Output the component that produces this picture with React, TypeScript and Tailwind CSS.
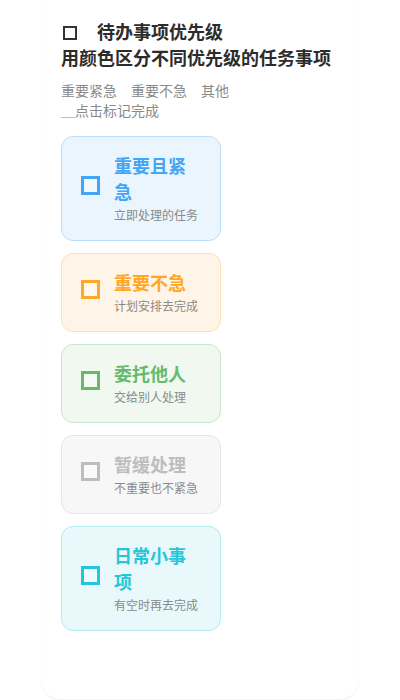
const FONT = {
  fontFamily: '"Noto Sans CJK SC", "Noto Sans", sans-serif',
};

type Card = {
  title: string;
  desc: string;
  text: string;
  box: string;
  bg: string;
  border: string;
};

const CARDS: Card[] = [
  {
    title: "重要且紧急",
    desc: "立即处理的任务",
    text: "text-[#42a5f5]",
    box: "border-[#42a5f5] bg-[#f1f8ff]",
    bg: "bg-[#ebf5fe]",
    border: "border-[#bbdefb]",
  },
  {
    title: "重要不急",
    desc: "计划安排去完成",
    text: "text-[#ffa726]",
    box: "border-[#ffa726] bg-[#fff8f0]",
    bg: "bg-[#fff4e8]",
    border: "border-[#ffe0b2]",
  },
  {
    title: "委托他人",
    desc: "交给别人处理",
    text: "text-[#66bb6a]",
    box: "border-[#66bb6a] bg-[#f5faf5]",
    bg: "bg-[#f0f8f0]",
    border: "border-[#c8e6c9]",
  },
  {
    title: "暂缓处理",
    desc: "不重要也不紧急",
    text: "text-[#bdbdbd]",
    box: "border-[#bdbdbd] bg-[#fafafa]",
    bg: "bg-[#f7f7f7]",
    border: "border-[#e6e6e6]",
  },
  {
    title: "日常小事项",
    desc: "有空时再去完成",
    text: "text-[#26c6da]",
    box: "border-[#26c6da] bg-[#eefafc]",
    bg: "bg-[#e8f8fb]",
    border: "border-[#b2ebf2]",
  },
];

function TaskCard({ card }: { card: Card }) {
  return (
    <div
      className={`flex w-[160px] items-center rounded-xl border pb-4 pl-[19px] pr-[18px] pt-[15px] ${card.bg} ${card.border}`}
    >
      <span
        className={`-mt-[6px] h-[19px] w-[19px] shrink-0 border-[3px] ${card.box}`}
      />
      <div className="ml-[14px] flex-1">
        <div className={`text-[18px] font-semibold leading-[26px] ${card.text}`}>
          {card.title}
        </div>
        <div className="mt-0.5 text-[12px] leading-[18px] text-[#8a8a8a]">
          {card.desc}
        </div>
      </div>
    </div>
  );
}

export default function App() {
  return (
    <div className="min-h-[700px] bg-white" style={FONT}>
      <div className="mx-auto w-[318px] rounded-b-[20px] bg-white px-5 pb-[68px] pt-[18px] shadow-[0_2px_3px_-1px_rgba(0,0,0,0.08)]">
        <h1 className="text-[18px] font-bold leading-[26px] text-[#2c2c2c]">
          <span className="ml-[2px] mr-5 inline-block h-[14px] w-[14px] border-2 border-[#333] align-[-1px]" />
          待办事项优先级
        </h1>
        <p className="text-[18px] font-bold leading-[26px] text-[#2c2c2c]">
          用颜色区分不同优先级的任务事项
        </p>

        <div className="mt-[10px] text-[14px] leading-[20px] text-[#8a8a8a]">
          <div>重要紧急　重要不急　其他</div>
          <div>＿点击标记完成</div>
        </div>

        <div className="mt-4 flex flex-col gap-3">
          {CARDS.map((c) => (
            <TaskCard key={c.title} card={c} />
          ))}
        </div>
      </div>
    </div>
  );
}
